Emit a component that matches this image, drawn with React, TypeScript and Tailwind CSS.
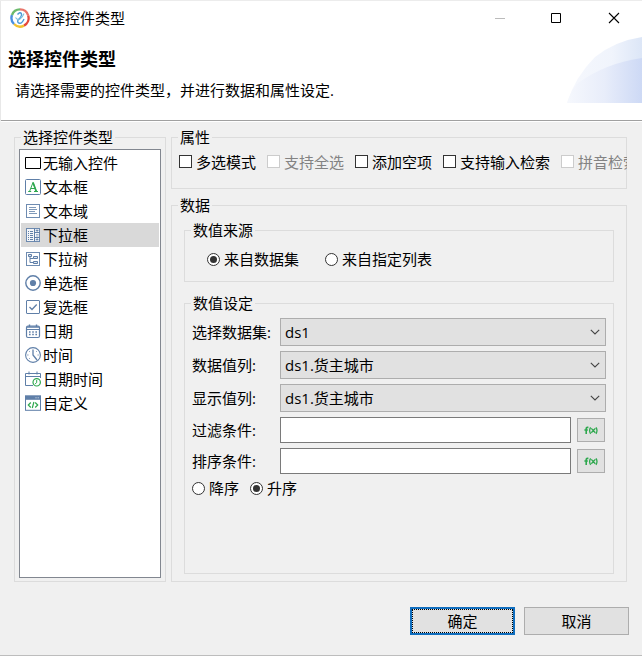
import type { ReactNode } from "react";
import clsx from "clsx";

interface ControlType {
  label: string;
  icon: ReactNode;
}

const BLUE = "#5f7fa8";
const GREEN = "#2fa84f";

const controlTypes: ControlType[] = [
  {
    label: "无输入控件",
    icon: <path d="M.5 2.5h15v11H.5z" fill="#fff" stroke="#000" />,
  },
  {
    label: "文本框",
    icon: (
      <>
        <rect x=".5" y=".5" width="15" height="15" rx="1" fill="#fff" stroke={BLUE} />
        <path
          d="M3.2 12.5h3M9 12.5h4M4.6 12.3L8 3.5l3.4 8.8M5.8 9.5h4.2"
          fill="none"
          stroke={GREEN}
        />
        <path d="M8 3.5l3.2 8.8" stroke={GREEN} strokeWidth="1.7" />
      </>
    ),
  },
  {
    label: "文本域",
    icon: (
      <>
        <rect x="1.5" y="1.5" width="13" height="13" fill="#fff" stroke={BLUE} strokeOpacity=".9" />
        <path d="M4 4.5h7M4 6.5h8M4 8.5h6M4 10.5h8" stroke={BLUE} strokeOpacity=".8" />
      </>
    ),
  },
  {
    label: "下拉框",
    icon: (
      <>
        <rect x="1.5" y="1.5" width="13" height="13" fill="#f4f6f9" stroke={BLUE} strokeOpacity=".9" />
        <path d="M9.5 1.5v13M9.5 5.5h5M9.5 10.5h5" stroke={BLUE} />
        <path d="M3 4.5h1M5 4.5h3M3 6.5h1M5 6.5h3M3 8.5h1M5 8.5h3M3 10.5h1M5 10.5h3M3 12.5h1M5 12.5h3" stroke={BLUE} />
        <path d="M10.8 3l1.3 1.5L13.4 3zM10.8 13l1.3-1.5 1.3 1.5zM11 7.5h2.5M11 9h2.5" fill={BLUE} stroke={BLUE} strokeWidth=".6" />
      </>
    ),
  },
  {
    label: "下拉树",
    icon: (
      <>
        <rect x="1.5" y="1.5" width="13" height="13" fill="#fff" stroke={BLUE} strokeOpacity=".9" />
        <path d="M5 5v6.5h3.5M5 7.5h3.5" fill="none" stroke={BLUE} />
        <path d="M3.5 3.5h3v2h-3zM8.5 5.5h4v2h-4zM8.5 10.5h4v2h-4z" fill="#dfe6f0" stroke={BLUE} />
      </>
    ),
  },
  {
    label: "单选框",
    icon: (
      <>
        <circle cx="8" cy="8" r="7.2" fill="#fff" stroke={BLUE} strokeWidth="1.4" />
        <circle cx="8" cy="8" r="3.1" fill={BLUE} />
      </>
    ),
  },
  {
    label: "复选框",
    icon: (
      <>
        <rect x="1.5" y="1.5" width="13" height="13" rx=".5" fill="#fff" stroke={BLUE} />
        <path d="M4.5 8l2.5 2.5 4.7-5" fill="none" stroke={BLUE} strokeWidth="1.3" />
      </>
    ),
  },
  {
    label: "日期",
    icon: (
      <>
        <rect x="1.5" y="3" width="13" height="11.5" rx="1.5" fill="#fff" stroke={BLUE} strokeWidth="1.2" />
        <path d="M2 4h12M4.5 1.5v3M11.5 1.5v3" stroke={BLUE} strokeWidth="1.4" />
        <path d="M1.5 6.5h13" stroke={BLUE} />
        <path d="M4 9h8M4 11.5h8" stroke={BLUE} strokeWidth="1.6" strokeDasharray="1.6 1.6" />
      </>
    ),
  },
  {
    label: "时间",
    icon: (
      <>
        <circle cx="8" cy="8" r="7.4" fill="#fff" stroke={BLUE} strokeWidth="1.1" />
        <path d="M8 2.5V8l4 5" fill="none" stroke={BLUE} strokeWidth="1.3" />
        <path d="M2.2 8h1.3M12.5 8h1.3M4 4l.8.8M12 4l-.8.8M4 12l.8-.8" stroke={BLUE} strokeWidth=".8" />
      </>
    ),
  },
  {
    label: "日期时间",
    icon: (
      <>
        <path d="M8 14.5H.5V2.5h15V7" fill="none" stroke={BLUE} />
        <path d="M.5 5.5h15M4 .5v3M12 .5v3" stroke={BLUE} />
        <circle cx="11.7" cy="11.3" r="3.7" fill="#fff" stroke={GREEN} strokeWidth="1.2" />
        <path d="M11.7 9v2.6l-1.6 1.3" fill="none" stroke={GREEN} />
      </>
    ),
  },
  {
    label: "自定义",
    icon: (
      <>
        <rect x=".5" y=".8" width="15" height="14.5" fill="#fff" stroke={BLUE} />
        <path d="M.5 1h15v3.8H.5z" fill={BLUE} />
        <path d="M10.5 2.8h1M12.7 2.8h1" stroke="#fff" strokeWidth=".8" />
        <path d="M5.8 7.5L3.3 10l2.5 2.5M10.2 7.5l2.5 2.5-2.5 2.5M8.9 7l-1.6 6" fill="none" stroke={GREEN} strokeWidth="1.2" />
      </>
    ),
  },
];

const SELECTED_TYPE = "下拉框";

function GroupBox({ title, className, children }: { title: string; className?: string; children: ReactNode }) {
  return (
    <fieldset className={clsx("min-w-0 border border-[#dcdcdc]", className)}>
      <legend className="ml-[6px] h-5 px-[2px] leading-5">{title}</legend>
      {children}
    </fieldset>
  );
}

function CheckBox({ label, disabled }: { label: string; disabled?: boolean }) {
  return (
    <label className={clsx("flex shrink-0 items-center gap-1", disabled && "text-[#838383]")}>
      <span className={clsx("mb-px size-[13px] border bg-white", disabled ? "border-[#cccccc]" : "border-[#333333]")} />
      {label}
    </label>
  );
}

function Radio({ label, checked }: { label: string; checked?: boolean }) {
  return (
    <label className="flex items-center gap-1">
      <span className="flex size-[13px] items-center justify-center rounded-full border border-[#333333] bg-white">
        {checked && <span className="size-[7px] rounded-full bg-[#333333]" />}
      </span>
      {label}
    </label>
  );
}

function SelectRow({ label, value }: { label: string; value: string }) {
  return (
    <div className="flex h-7 items-center">
      <span className="w-[88px] shrink-0">{label}</span>
      <div className="flex h-7 flex-1 items-center justify-between border border-[#adadad] bg-[#e1e1e1] pr-[5px] pl-[4px]">
        <span>{value}</span>
        <svg width="10" height="6" viewBox="0 0 10 6" fill="none" stroke="#444">
          <path d="M.8.8L5 5 9.2.8" strokeWidth="1.1" />
        </svg>
      </div>
    </div>
  );
}

function InputRow({ label }: { label: string }) {
  return (
    <div className="flex h-[26px] items-center">
      <span className="w-[88px] shrink-0">{label}</span>
      <div className="h-[26px] flex-1 border border-[#7a7a7a] bg-white" />
      <button className="mr-px ml-[6px] flex h-6 w-7 items-center justify-center border border-[#adadad] bg-[#e1e1e1]">
        <svg width="14" height="9" viewBox="0 0 14 9" fill="none" stroke={GREEN} strokeWidth="1.6">
          <path d="M4.4 1.4H3.5Q2.2 1.4 2.2 2.6V8M.4 4h3.4" />
          <path d="M6.6 1.4Q4.6 4.6 6.6 7.8M12 1.4q2 3.2 0 6.4M7.3 2.4l4 4.4M11.3 2.4l-4 4.4" strokeWidth="1.3" />
        </svg>
      </button>
    </div>
  );
}

function AppLogo() {
  return (
    <svg width="20" height="20" viewBox="0 0 20 20" fill="none">
      <g strokeWidth="2.4">
        <path d="M10 1.4A8.6 8.6 0 0 1 18.2 7.5" stroke="#e8756a" />
        <path d="M18.2 7.5A8.6 8.6 0 0 1 14 17.6" stroke="#e5483c" />
        <path d="M14 17.6A8.6 8.6 0 0 1 4 16" stroke="#f2c230" />
        <path d="M4 16A8.6 8.6 0 0 1 2 7" stroke="#4a90e0" />
        <path d="M2 7A8.6 8.6 0 0 1 10 1.4" stroke="#6cba6c" />
      </g>
      <path d="M7.5 6.5Q10 3.5 11.3 5.5T8 12q-1 3 1.5 3.3T14 11" stroke="#4a9ad8" strokeWidth="1.4" />
      <path d="M5.5 9.5q2 3 4.5 1.5T14 5.5" stroke="#7cc0dd" strokeWidth="1.1" />
    </svg>
  );
}

function BannerArc() {
  return (
    <svg className="absolute top-[34px] right-0" width="76" height="68" viewBox="0 0 76 68">
      <defs>
        <linearGradient id="arc-outer" x1="0" x2="1">
          <stop offset="0" stopColor="#f6f8fd" />
          <stop offset=".6" stopColor="#f0f4fc" />
          <stop offset="1" stopColor="#dce6f7" />
        </linearGradient>
        <linearGradient id="arc-inner" x1="0" x2="1">
          <stop offset="0" stopColor="#f6f8fd" />
          <stop offset=".5" stopColor="#e8edfa" />
          <stop offset="1" stopColor="#cdd9f5" />
        </linearGradient>
      </defs>
      <path d="M1 68Q9 42 29 22 49 6 76 2V68z" fill="url(#arc-outer)" />
      <path d="M1 68Q5 55 12 48 40 28 76 23V68z" fill="url(#arc-inner)" />
    </svg>
  );
}

export default function App() {
  return (
    <div className="relative flex h-[656px] w-[642px] flex-col overflow-hidden border-t border-b border-t-[#ececec] border-b-[#bdbdbd] bg-[#f0f0f0] font-['Open_Sans','Noto_Sans_CJK_SC',sans-serif] text-[15px] leading-5 whitespace-nowrap text-black">
      {/* Title bar and banner */}
      <header className="relative h-[121px] shrink-0 border-b border-l border-b-white border-l-[#e8e8e8] bg-white">
        <BannerArc />
        <div className="flex h-[34px] items-center pl-[9px]">
          <AppLogo />
          <span className="ml-[5px]">选择控件类型</span>
          <svg className="ml-auto" width="154" height="34" viewBox="0 0 154 34" fill="none">
            <path d="M7 17.5h10" stroke="#bbb" />
            <path d="M63.5 12.5h9v9h-9z" stroke="#000" />
            <path d="M121 12l10 10M131 12l-10 10" stroke="#000" strokeWidth="1.1" />
          </svg>
        </div>
        <h1 className="mt-[14px] ml-[7px] text-[18px] leading-[20px] font-bold">选择控件类型</h1>
        <p className="mt-[11px] ml-[14px]">请选择需要的控件类型，并进行数据和属性设定.</p>
        <div className="absolute inset-x-0 bottom-0 h-px bg-[#a0a0a0]" />
      </header>

      <main className="flex gap-[5px] pt-[5px] pl-[14px]">
        <GroupBox title="选择控件类型" className="h-[455px] w-[152px]">
          <ul className="mx-1 mt-[2px] h-[429px] border border-[#828790] bg-white p-px">
            {controlTypes.map((type) => (
              <li
                key={type.label}
                className={clsx("flex h-6 items-center gap-[2px] pl-1", type.label === SELECTED_TYPE && "bg-[#d9d9d9]")}
              >
                <svg width="16" height="16" viewBox="0 0 16 16">
                  {type.icon}
                </svg>
                {type.label}
              </li>
            ))}
          </ul>
        </GroupBox>

        <div className="flex w-[456px] flex-col">
          <GroupBox title="属性" className="h-[62px]">
            <div className="-mr-px ml-[7px] flex gap-[11px] overflow-hidden pt-[5px]">
              <CheckBox label="多选模式" />
              <CheckBox label="支持全选" disabled />
              <CheckBox label="添加空项" />
              <CheckBox label="支持输入检索" />
              <CheckBox label="拼音检索" disabled />
            </div>
          </GroupBox>

          <GroupBox title="数据" className="mt-[6px] h-[387px]">
            <div className="mx-3 -mt-px">
              <GroupBox title="数值来源" className="mt-[6px] h-[62px]">
                <div className="flex gap-[26px] pt-[9px] pl-[22px]">
                  <Radio label="来自数据集" checked />
                  <Radio label="来自指定列表" />
                </div>
              </GroupBox>

              <GroupBox title="数值设定" className="mt-[11px] h-[281px]">
                <div className="flex flex-col gap-[5px] pt-[5px] pr-[7px] pl-[7px]">
                  <SelectRow label="选择数据集:" value="ds1" />
                  <SelectRow label="数据值列:" value="ds1.货主城市" />
                  <SelectRow label="显示值列:" value="ds1.货主城市" />
                  <InputRow label="过滤条件:" />
                  <InputRow label="排序条件:" />
                  <div className="-mt-px flex gap-[11px]">
                    <Radio label="降序" />
                    <Radio label="升序" checked />
                  </div>
                </div>
              </GroupBox>
            </div>
          </GroupBox>
        </div>
      </main>

      <footer className="mt-[25px] flex gap-[9px] pl-[410px]">
        <button className="h-7 w-[105px] border-2 border-[#106ebe] bg-[#e1e1e1]">
          <span className="flex h-full items-center justify-center border border-dotted border-black">确定</span>
        </button>
        <button className="h-7 w-[105px] border border-[#adadad] bg-[#e1e1e1]">取消</button>
      </footer>
    </div>
  );
}
